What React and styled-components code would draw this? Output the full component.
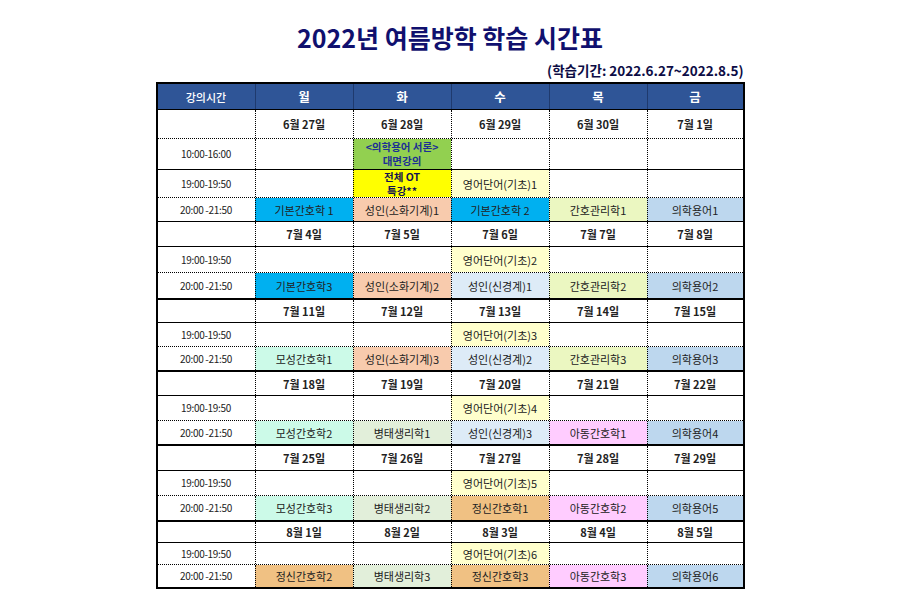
import React from "react";
import styled, { createGlobalStyle } from "styled-components";

const GlobalStyle = createGlobalStyle`
  html, body {
    margin: 0;
    padding: 0;
    background: #fff;
  }
  body {
    font-family: "Noto Sans CJK KR", "Noto Sans", sans-serif;
  }
  * {
    box-sizing: border-box;
  }
`;

const C = {
  green: "#92d050",
  yellow: "#ffff00",
  blue: "#00b0f0",
  peach: "#f8cbad",
  cream: "#ffffcc",
  lime: "#ebf7c1",
  sky: "#bdd7ee",
  steel: "#ddebf7",
  mint: "#ccfae8",
  sage: "#e2efda",
  pink: "#ffccff",
  tan: "#f0c183",
};

const DAYS = ["월", "화", "수", "목", "금"];

const eng = (n) => ({ text: `영어단어(기초)${n}`, bg: C.cream });

const weeks = [
  {
    dates: ["6월 27일", "6월 28일", "6월 29일", "6월 30일", "7월 1일"],
    heights: [28, 31, 28, 24],
    lines: ["dot", "thin", "dot"],
    rows: [
      {
        time: "10:00-16:00",
        cells: [null, { lines: ["<의학용어 서론>", "대면강의"], bg: C.green, tone: "blue" }, null, null, null],
      },
      {
        time: "19:00-19:50",
        cells: [null, { lines: ["전체 OT", "특강**"], bg: C.yellow, tone: "navy" }, eng(1), null, null],
      },
      {
        time: "20:00 -21:50",
        cells: [
          { text: "기본간호학 1", bg: C.blue },
          { text: "성인(소화기계)1", bg: C.peach },
          { text: "기본간호학 2", bg: C.blue },
          { text: "간호관리학1", bg: C.lime },
          { text: "의학용어1", bg: C.sky },
        ],
      },
    ],
  },
  {
    dates: ["7월 4일", "7월 5일", "7월 6일", "7월 7일", "7월 8일"],
    heights: [25, 26, 26],
    rows: [
      { time: "19:00-19:50", cells: [null, null, eng(2), null, null] },
      {
        time: "20:00 -21:50",
        cells: [
          { text: "기본간호학3", bg: C.blue },
          { text: "성인(소화기계)2", bg: C.peach },
          { text: "성인(신경계)1", bg: C.steel },
          { text: "간호관리학2", bg: C.lime },
          { text: "의학용어2", bg: C.sky },
        ],
      },
    ],
  },
  {
    dates: ["7월 11일", "7월 12일", "7월 13일", "7월 14일", "7월 15일"],
    heights: [24, 24, 24],
    rows: [
      { time: "19:00-19:50", cells: [null, null, eng(3), null, null] },
      {
        time: "20:00 -21:50",
        cells: [
          { text: "모성간호학1", bg: C.mint },
          { text: "성인(소화기계)3", bg: C.peach },
          { text: "성인(신경계)2", bg: C.steel },
          { text: "간호관리학3", bg: C.lime },
          { text: "의학용어3", bg: C.sky },
        ],
      },
    ],
  },
  {
    dates: ["7월 18일", "7월 19일", "7월 20일", "7월 21일", "7월 22일"],
    heights: [25, 25, 24],
    rows: [
      { time: "19:00-19:50", cells: [null, null, eng(4), null, null] },
      {
        time: "20:00 -21:50",
        cells: [
          { text: "모성간호학2", bg: C.mint },
          { text: "병태생리학1", bg: C.sage },
          { text: "성인(신경계)3", bg: C.steel },
          { text: "아동간호학1", bg: C.pink },
          { text: "의학용어4", bg: C.sky },
        ],
      },
    ],
  },
  {
    dates: ["7월 25일", "7월 26일", "7월 27일", "7월 28일", "7월 29일"],
    heights: [26, 25, 25],
    rows: [
      { time: "19:00-19:50", cells: [null, null, eng(5), null, null] },
      {
        time: "20:00 -21:50",
        cells: [
          { text: "모성간호학3", bg: C.mint },
          { text: "병태생리학2", bg: C.sage },
          { text: "정신간호학1", bg: C.tan },
          { text: "아동간호학2", bg: C.pink },
          { text: "의학용어5", bg: C.sky },
        ],
      },
    ],
  },
  {
    dates: ["8월 1일", "8월 2일", "8월 3일", "8월 4일", "8월 5일"],
    heights: [22, 22, 23],
    rows: [
      { time: "19:00-19:50", cells: [null, null, eng(6), null, null] },
      {
        time: "20:00 -21:50",
        cells: [
          { text: "정신간호학2", bg: C.tan },
          { text: "병태생리학3", bg: C.sage },
          { text: "정신간호학3", bg: C.tan },
          { text: "아동간호학3", bg: C.pink },
          { text: "의학용어6", bg: C.sky },
        ],
      },
    ],
  },
];

const lineStyle = {
  none: "none",
  dot: "1px dotted #000",
  thin: "1px solid #000",
  thick: "2px solid #000",
};

const Page = styled.div`
  width: 900px;
  height: 600px;
  padding-top: 21px;
  display: flex;
  flex-direction: column;
  align-items: center;
`;

const Sheet = styled.div`
  width: 589px;
  display: flex;
  flex-direction: column;
`;

const Title = styled.h1`
  margin: 0;
  font-size: 25px;
  line-height: 32px;
  font-weight: 700;
  color: #10106e;
  text-align: center;
`;

const Period = styled.div`
  margin-top: 8px;
  font-size: 13.5px;
  line-height: 18px;
  font-weight: 700;
  color: #0c0c45;
  text-align: right;
  padding-right: 1px;
`;

const Grid = styled.div`
  margin-top: 3px;
  border: 2px solid #000;
  display: flex;
  flex-direction: column;
`;

const Row = styled.div`
  display: grid;
  grid-template-columns: 97px 98px 98px 98px 98px 1fr;
  height: ${(p) => p.$h}px;
  border-top: ${(p) => lineStyle[p.$line || "none"]};
`;

const HeadRow = styled(Row)`
  background: #2f5597;
  color: #fff;
  border-bottom: 1px solid #000;
`;

const HeadCell = styled.div`
  display: flex;
  align-items: center;
  justify-content: center;
  font-size: ${(p) => (p.$small ? "11px" : "12.5px")};
  font-weight: ${(p) => (p.$small ? 500 : 700)};
  border-left: ${(p) => (p.$first ? "none" : "1px solid #1f3a6e")};
`;

const Cell = styled.div`
  display: flex;
  flex-direction: column;
  align-items: center;
  justify-content: center;
  background: ${(p) => p.$bg || "transparent"};
  border-left: ${(p) => (p.$first ? "none" : "1px dotted #000")};
  font-size: ${(p) => (p.$time ? "10px" : p.$tone ? "10.5px" : "11px")};
  font-weight: ${(p) => (p.$bold ? 700 : 400)};
  color: ${(p) => (p.$tone === "blue" ? "#1c2f94" : p.$tone === "navy" ? "#14144f" : "#222")};
  line-height: 14px;
  white-space: nowrap;
  overflow: hidden;
  letter-spacing: ${(p) => (p.$time ? "-0.3px" : "0")};
`;

const Line = styled.span`
  display: block;
  height: 14px;
`;

function WeekBlock({ week, index }) {
  const inner = week.lines || ["thin", "dot"];
  const topLine = index === 0 ? "none" : index === 1 ? "thin" : "thick";
  return (
    <>
      <Row $h={week.heights[0]} $line={topLine}>
        <Cell $first />
        {week.dates.map((d) => (
          <Cell key={d} $bold>
            {d}
          </Cell>
        ))}
      </Row>
      {week.rows.map((r, i) => (
        <Row key={r.time + i} $h={week.heights[i + 1]} $line={inner[i]}>
          <Cell $first $time>
            {r.time}
          </Cell>
          {r.cells.map((c, j) =>
            c ? (
              <Cell key={j} $bg={c.bg} $tone={c.tone} $bold={!!c.tone}>
                {c.lines ? c.lines.map((l) => <Line key={l}>{l}</Line>) : c.text}
              </Cell>
            ) : (
              <Cell key={j} />
            )
          )}
        </Row>
      ))}
    </>
  );
}

export default function App() {
  return (
    <>
      <GlobalStyle />
      <Page>
        <Sheet>
          <Title>2022년 여름방학 학습 시간표</Title>
          <Period>(학습기간: 2022.6.27~2022.8.5)</Period>
          <Grid>
            <HeadRow $h={26}>
              <HeadCell $first $small>
                강의시간
              </HeadCell>
              {DAYS.map((d) => (
                <HeadCell key={d}>{d}</HeadCell>
              ))}
            </HeadRow>
            {weeks.map((w, i) => (
              <WeekBlock key={w.dates[0]} week={w} index={i} />
            ))}
          </Grid>
        </Sheet>
      </Page>
    </>
  );
}
